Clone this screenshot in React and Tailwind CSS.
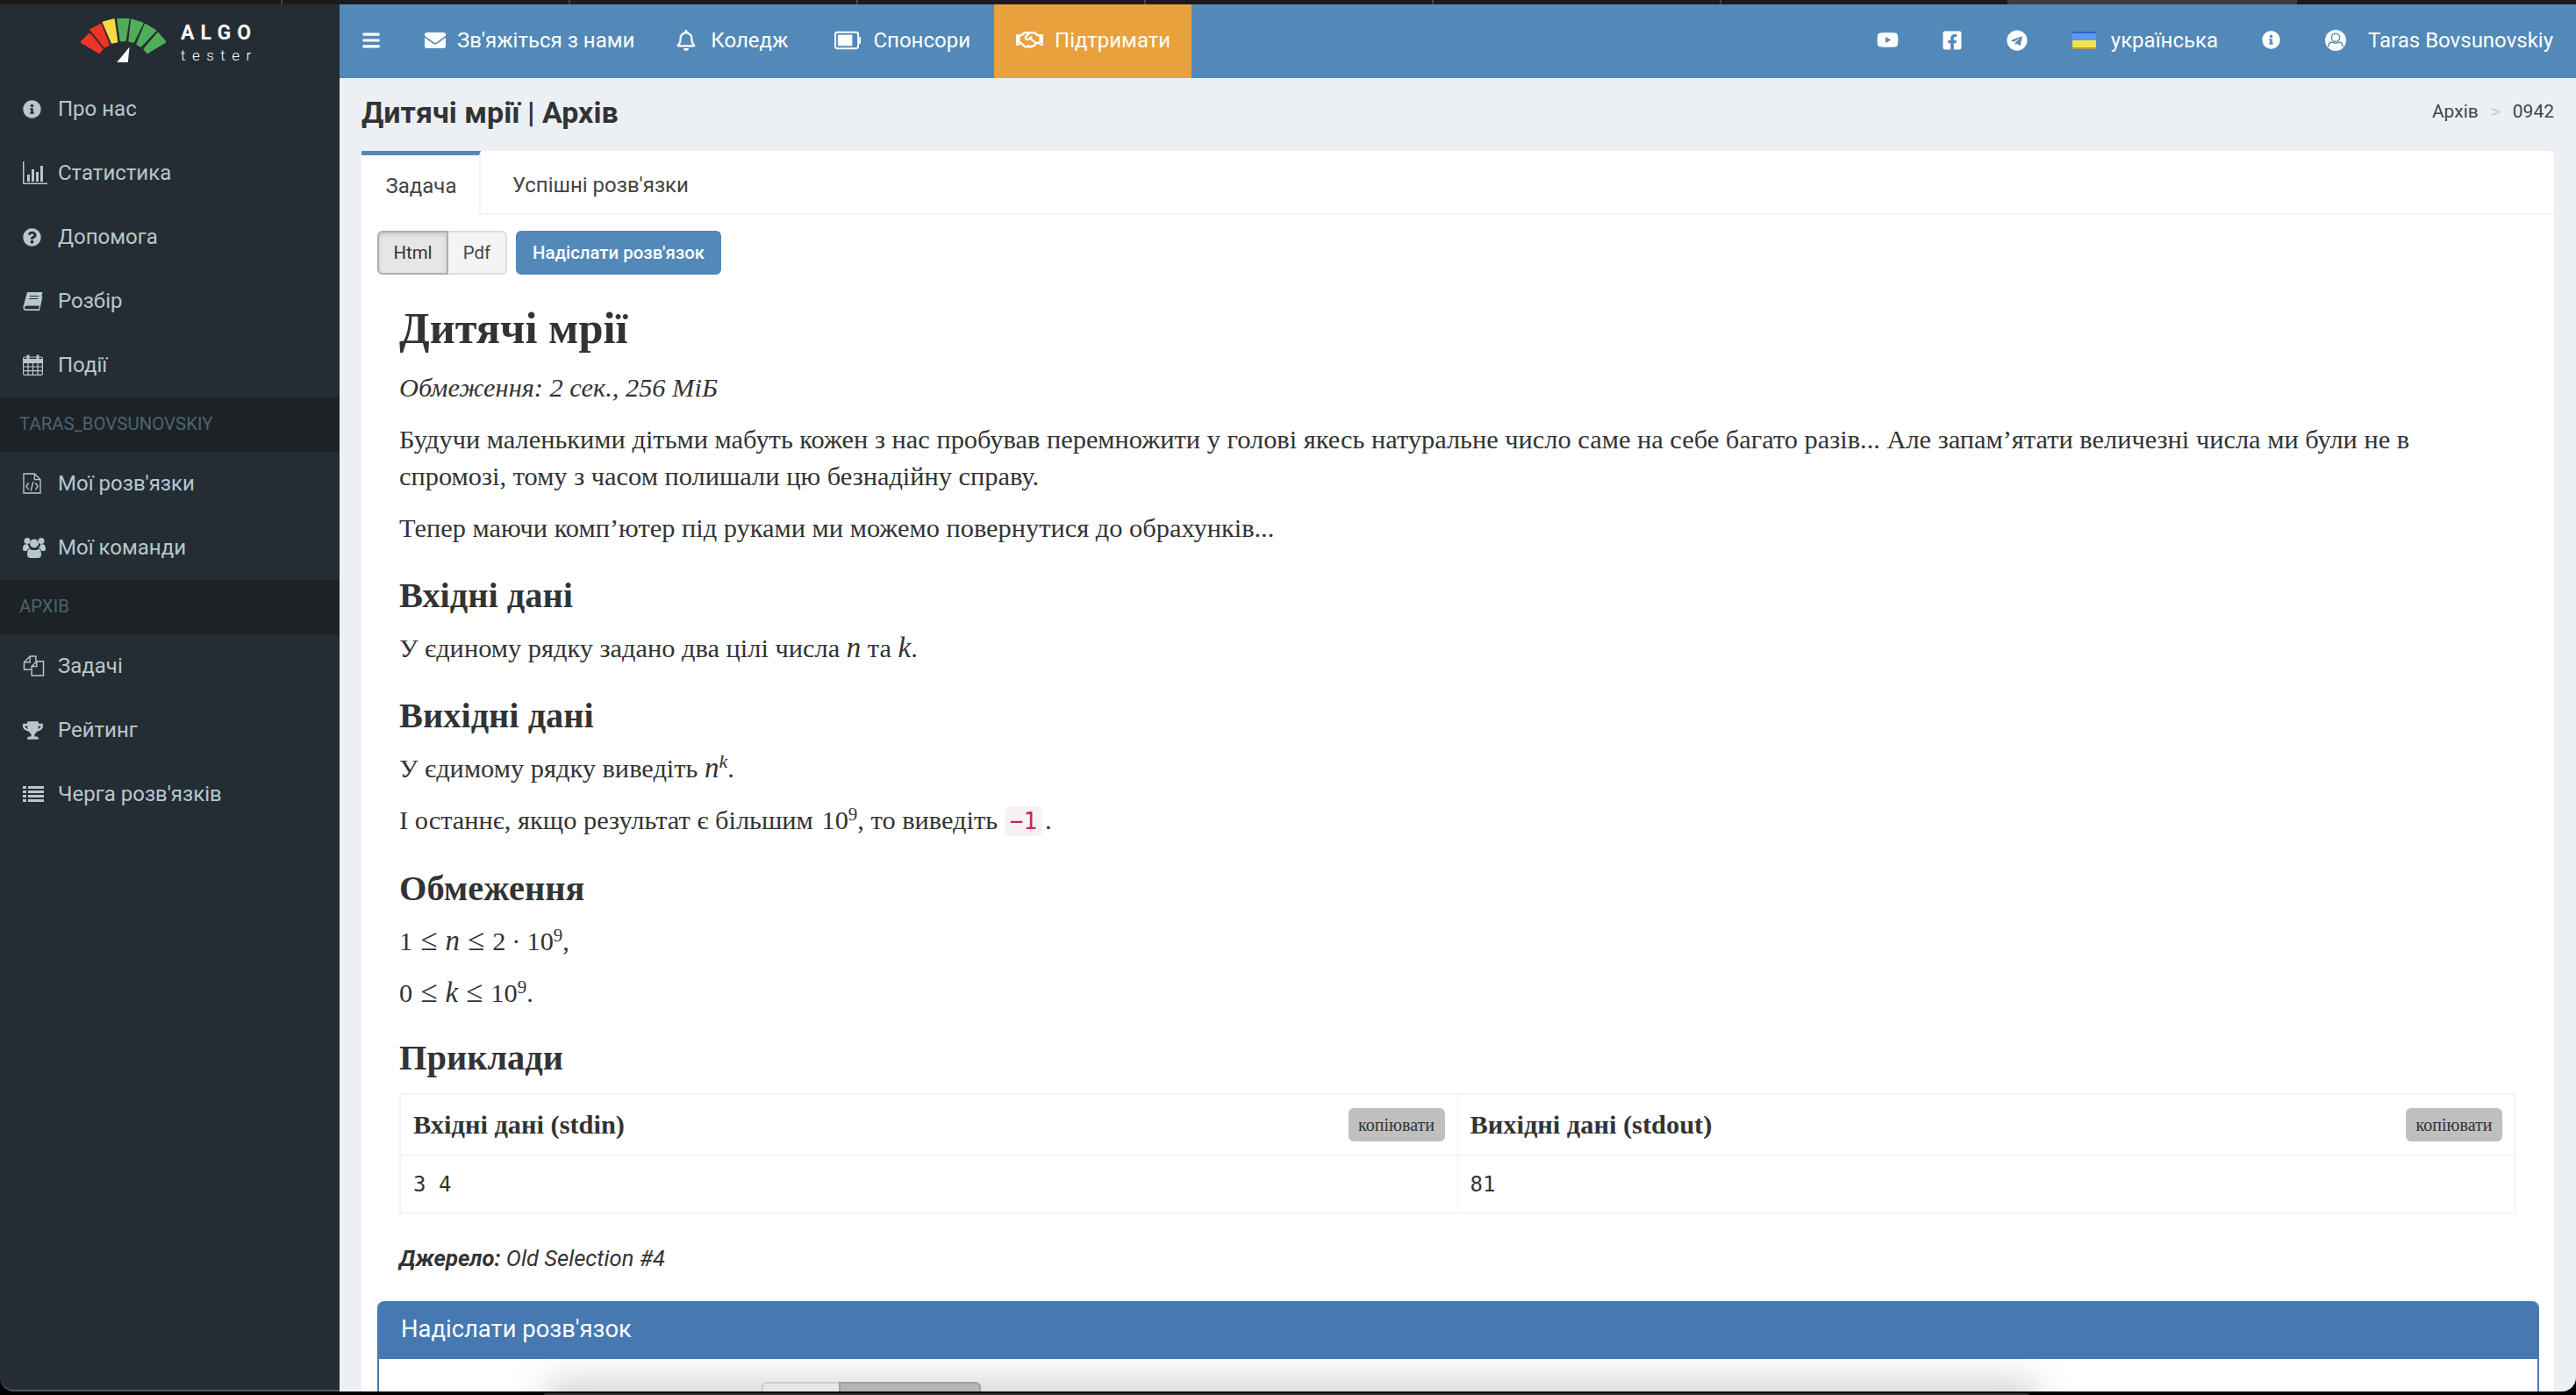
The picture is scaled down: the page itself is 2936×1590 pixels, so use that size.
import {
  FaBars, FaEnvelope, FaRegBell, FaRegHandshake, FaYoutube, FaFacebookSquare, FaTelegram,
  FaInfoCircle, FaQuestionCircle, FaTrophy,
} from 'react-icons/fa';

const SANS = 'font-["Roboto","Noto_Sans",sans-serif]';

function BarChartIcon() {
  return (
    <svg viewBox="0 0 28 26" className="w-[28px] h-[26px]" fill="currentColor">
      <path d="M0 0h1.5v24.5H28V26H0z" />
      <path d="M5 15h3v8H5zM10 9h3v14h-3zM15 12h3v11h-3zM20 5h3v18h-3z" />
    </svg>
  );
}

function BookIcon() {
  return (
    <svg viewBox="0 0 23 21" className="w-[23px] h-[21px]">
      <path
        fill="currentColor"
        d="M5 0h17.5L19 15.5H4.5C3 15.5 2 16.5 2 17.5S3 19.3 4.5 19.3H18l3.2-14h1.3L19 21H4C1.5 21 0 19.3 .4 17z"
      />
      <path d="M8 4.5h10M7.3 7.5h10" stroke="#252d34" strokeWidth="1.2" />
    </svg>
  );
}

function CalendarIcon() {
  return (
    <svg viewBox="0 0 23 24" className="w-[23px] h-[24px]" fill="none" stroke="currentColor" strokeWidth="1.2">
      <rect x=".6" y="3" width="21.8" height="20.4" rx="1.5" />
      <path d="M.6 9.5h21.8M.6 14h21.8M.6 18.7h21.8M6 9.5v13.9M11.5 9.5v13.9M17 9.5v13.9" />
      <path d="M6 .5v5M17 .5v5" strokeWidth="3" />
      <path d="M.6 5h21.8v4.5H.6z" fill="currentColor" stroke="none" />
    </svg>
  );
}

function UsersIcon() {
  return (
    <svg viewBox="0 0 26 24" className="w-[26px] h-[24px]" fill="currentColor">
      <circle cx="13" cy="7.5" r="5" />
      <circle cx="5" cy="4.5" r="3.5" />
      <circle cx="21" cy="4.5" r="3.5" />
      <path d="M1 9.5c1.2-1.2 3-1.5 5-1 .2 1.8 1 3.2 2.2 4.2-1.8.6-3.1 1.8-3.8 3.3H1.500C.4 16 0 15 0 13.5c0-1.5.3-3 1-4zM25 9.5c-1.2-1.2-3-1.5-5-1-.2 1.8-1 3.2-2.2 4.2 1.8.6 3.1 1.8 3.8 3.3h2.9c1.1 0 1.5-1 1.5-2.5 0-1.5-.3-3-1-4z" />
      <path d="M7.5 13.500c1.5 1 3.5 1.5 5.5 1.5s4-.5 5.5-1.500c1.8.8 2.5 3.500 2.500 6.500 0 2.500-1.500 4-3.500 4h-9C6.500 24 5 22.500 5 20c0-3 .7-5.700 2.500-6.500z" />
    </svg>
  );
}

function ListIcon() {
  return (
    <svg viewBox="0 0 24 18" className="w-[24px] h-[18px]" fill="currentColor">
      <path d="M0 0h4v3H0zM6 0h18v3H6zM0 5h4v3H0zM6 5h18v3H6zM0 10h4v3H0zM6 10h18v3H6zM0 15h4v3H0zM6 15h18v3H6z" />
    </svg>
  );
}

function FileCodeIcon() {
  return (
    <svg viewBox="0 0 22 25" className="w-[21px] h-[24px]" fill="none" stroke="currentColor" strokeWidth="1.4">
      <path d="M1 1h13l7 7v16H1zM14 1v7h7" />
      <path d="M7 12l-3 4 3 4M15 12l3 4-3 4M12.5 10.5l-3 11" />
    </svg>
  );
}

function FilesIcon() {
  return (
    <svg viewBox="0 0 25 25" className="w-[25px] h-[24px]" fill="none" stroke="currentColor" strokeWidth="1.5">
      <path d="M8 1h7v6M8 1L1 8v9h8M8 1v7H1" />
      <path d="M16 7h8v17H10V13zM16 7v6h-6" />
    </svg>
  );
}

function BatteryIcon() {
  return (
    <svg viewBox="0 0 32 22" className="w-[31px] h-[22px]" fill="none">
      <rect x="1" y="1.5" width="27" height="19" rx="2.5" stroke="white" strokeWidth="2" />
      <rect x="4" y="4.5" width="17" height="13" fill="white" />
      <path d="M29 7h2v8h-2z" fill="white" />
    </svg>
  );
}

function UserCircleIcon() {
  return (
    <svg viewBox="0 0 24 24" className="w-[24px] h-[24px]" fill="none">
      <circle cx="12" cy="12" r="12" fill="white" />
      <circle cx="12" cy="8.8" r="4.6" stroke="#5289b8" strokeWidth="1.4" />
      <path d="M3.6 19.5c.4-3.500 2.400-5.500 4.600-5.500 2.400 1.500 5.200 1.500 7.600 0 2.200 0 4.200 2 4.600 5.500" stroke="#5289b8" strokeWidth="1.4" />
    </svg>
  );
}

function Flag() {
  return (
    <div className="w-[27px] h-[20px] flex flex-col">
      <div className="h-1/2 bg-[#5b9bea] border-t-2 border-t-[#2f62d8]" />
      <div className="h-1/2 bg-[#f1e34c] border-b-2 border-b-[#b39a55]" />
    </div>
  );
}

function Logo() {
  const segs = [
    ['97,143 127,114 171,167 160,180', '#ee3524'],
    ['130,100 165,82 193,152 178,160', '#ee3524'],
    ['173,75 210,65 221,142 203,146', '#fdd845'],
    ['222,62 261,62 249,138 233,138', '#4fae57'],
    ['270,66 309,78 277,143 262,140', '#4fae57'],
    ['317,82 353,104 302,158 289,150', '#4fae57'],
    ['360,112 387,142 325,180 313,167', '#4fae57'],
  ];
  return (
    <div className="h-[83px] flex items-center pl-[92px] gap-[17px] shrink-0">
      <svg viewBox="97 62 290 150" className="w-[97px] h-[50px] mt-[-1px]">
        {segs.map(([pts, c]) => (
          <polygon key={pts} points={pts} fill={c} stroke={c} strokeWidth="5" strokeLinejoin="round" />
        ))}
        <polygon points="263,160 258,212 220,212" fill="#fff" />
      </svg>
      <div className="text-white mt-[4px]">
        <div className="text-[23px] leading-[26px] font-bold tracking-[0.31em]">ALGO</div>
        <div className="text-[17px] leading-[20px] mt-[2px] font-light tracking-[0.44em]">tester</div>
      </div>
    </div>
  );
}

function SideItem({ icon, label }) {
  return (
    <div className="h-[73px] flex items-center pl-[26px] pb-[1px] text-[#b8c7ce] text-[24px]">
      <span className="w-[40px] flex items-center">{icon}</span>
      {label}
    </div>
  );
}

function SideHeader({ label }) {
  return (
    <div className="h-[62px] flex items-center pl-[22px] pb-[2px] bg-[#1c2226] text-[#4b646f] text-[20.4px]">{label}</div>
  );
}

function Sidebar() {
  return (
    <aside className="w-[387px] shrink-0 bg-[#252d34] flex flex-col rounded-bl-[16px] border-b-2 border-[#50575c]">
      <Logo />
      <SideItem icon={<FaInfoCircle size={21} />} label="Про нас" />
      <SideItem icon={<BarChartIcon />} label="Статистика" />
      <SideItem icon={<FaQuestionCircle size={21} />} label="Допомога" />
      <SideItem icon={<BookIcon />} label="Розбір" />
      <SideItem icon={<CalendarIcon />} label="Події" />
      <SideHeader label="TARAS_BOVSUNOVSKIY" />
      <SideItem icon={<FileCodeIcon />} label="Мої розв'язки" />
      <SideItem icon={<UsersIcon />} label="Мої команди" />
      <SideHeader label="АРХІВ" />
      <SideItem icon={<FilesIcon />} label="Задачі" />
      <SideItem icon={<FaTrophy size={23} />} label="Рейтинг" />
      <SideItem icon={<ListIcon />} label="Черга розв'язків" />
    </aside>
  );
}

function NavItem({ icon, label, className = '' }) {
  return (
    <div className={`h-full flex items-center gap-[13px] px-[25px] pb-[3px] text-white text-[24px] ${className}`}>
      {icon}
      {label}
    </div>
  );
}

function Navbar() {
  return (
    <header className="h-[84px] shrink-0 bg-[#5289b8] flex items-center">
      <NavItem icon={<FaBars size={22} />} />
      <NavItem icon={<FaEnvelope size={24} />} label="Зв'яжіться з нами" className="mr-[-3px]" />
      <NavItem icon={<FaRegBell size={24} />} label="Коледж" className="mr-[3px] gap-[16px]" />
      <NavItem icon={<BatteryIcon />} label="Спонсори" className="mr-[2px]" />
      <NavItem icon={<FaRegHandshake size={31} />} label="Підтримати" className="bg-[#e8a13c] pr-[24px]" />
      <div className="ml-auto h-full flex items-center pr-[26px] pb-[3px] text-white text-[24px]">
        <FaYoutube size={25} className="mr-[49px]" />
        <FaFacebookSquare size={24} className="mr-[50px]" />
        <FaTelegram size={24} className="mr-[51px]" />
        <Flag />
        <span className="ml-[17px] mr-[50px]">українська</span>
        <FaInfoCircle size={21} className="mr-[51px]" />
        <UserCircleIcon />
        <span className="ml-[25px]">Taras Bovsunovskiy</span>
      </div>
    </header>
  );
}

function Heading({ children, className = 'mt-[34px]' }) {
  return <h3 className={`text-[40.4px] leading-[44px] font-bold text-[#333] mb-[17px] ${className}`}>{children}</h3>;
}

function P({ children }) {
  return <p className="mb-[17px]">{children}</p>;
}

function M({ children }) {
  return <i className="text-[33px] leading-none">{children}</i>;
}

function Le() {
  return <span className="text-[35px] leading-none mx-[9px]">≤</span>;
}

function CopyBtn() {
  return (
    <span className="h-[38px] w-[110px] flex items-center justify-center rounded-[6px] bg-[#bfbfbf] text-[20px] font-normal text-[#333] shrink-0">
      копіювати
    </span>
  );
}

function Examples() {
  return (
    <div className="grid grid-cols-2 border-2 border-[#f4f4f4] mt-[18px]">
      <div className="h-[70px] flex items-center justify-between pl-[14px] pr-[14px] border-r border-[#f4f4f4] border-b-2 font-bold">
        Вхідні дані (stdin)
        <CopyBtn />
      </div>
      <div className="h-[70px] flex items-center justify-between pl-[14px] pr-[14px] border-b-2 border-[#f4f4f4] font-bold">
        Вихідні дані (stdout)
        <CopyBtn />
      </div>
      <div className={'h-[64px] flex items-center pl-[14px] border-r border-[#f4f4f4] text-[24px] font-["DejaVu_Sans_Mono",monospace]'}>
        3 4
      </div>
      <div className={'h-[64px] flex items-center pl-[14px] text-[24px] font-["DejaVu_Sans_Mono",monospace]'}>81</div>
    </div>
  );
}

function Problem() {
  return (
    <div className={'pl-[43px] pt-[33px] pr-[43px] text-[30.4px] leading-[42px] text-[#333] font-["Liberation_Serif",serif]'}>
      <h1 className="text-[50.4px] leading-[56px] font-bold mb-[19px]">Дитячі мрії</h1>
      <p className="italic mb-[17px]">Обмеження: 2 сек., 256 МіБ</p>
      <P>
        Будучи маленькими дітьми мабуть кожен з нас пробував перемножити у голові якесь натуральне число саме на
        себе багато разів... Але запам’ятати величезні числа ми були не в спромозі, тому з часом полишали цю
        безнадійну справу.
      </P>
      <P>Тепер маючи комп’ютер під руками ми можемо повернутися до обрахунків...</P>
      <Heading>Вхідні дані</Heading>
      <P>
        У єдиному рядку задано два цілі числа <M>n</M> та <M>k</M>.
      </P>
      <Heading>Вихідні дані</Heading>
      <P>
        У єдимому рядку виведіть <M>n</M>
        <sup className="italic text-[22px]">k</sup>.
      </P>
      <P>
        І останнє, якщо результат є більшим <span className="ml-[2px]">10</span>
        <sup className="text-[21px]">9</sup>, то виведіть{' '}
        <code className={'px-[6px] py-[2px] bg-[#f9f2f4] text-[#c7254e] rounded-[6px] text-[26px] font-["DejaVu_Sans_Mono",monospace]'}>
          −1
        </code>
        <span className="ml-[3px]">.</span>
      </P>
      <Heading>Обмеження</Heading>
      <P>
        1<Le /><M>n</M><Le />2<span className="mx-[7px]">·</span>10<sup className="text-[21px]">9</sup>,
      </P>
      <P>
        0<Le /><M>k</M><Le />10<sup className="text-[21px]">9</sup>.
      </P>
      <Heading className="mt-[31px]">Приклади</Heading>
      <Examples />
      <p className={`${SANS} mt-[32px] text-[25.6px] leading-[36px] italic`}>
        <b>Джерело:</b> Old Selection #4
      </p>
    </div>
  );
}

function SubmitPanel() {
  return (
    <div className="mt-[31px] ml-[18px] mr-[17px] rounded-t-[8px] border-x-2 border-[#4678b2]">
      <div className="h-[66px] flex items-center pl-[25px] bg-[#4678b2] text-white text-[27.4px] rounded-t-[6px]">
        Надіслати розв'язок
      </div>
      <div className="relative h-[37px] overflow-hidden bg-white flex items-end pl-[436px]">
        {/* blurred shadow of the window below, lies over the form */}
        <div className="absolute left-[190px] right-[570px] top-[26px] h-[70px] bg-[#d0d0d0] blur-[20px]" />
        <div className="relative w-[88px] h-[11px] bg-[#e6e6e6] rounded-tl-[6px] border-t-2 border-l-2 border-[#cfcfcf]" />
        <div className="relative w-[162px] h-[11px] bg-[#b5b5b5] rounded-tr-[6px] border-t-2 border-x-2 border-[#a0a0a0]" />
      </div>
    </div>
  );
}

function Content() {
  return (
    <main className="flex-1 min-w-0 min-h-0 bg-[#ecf0f5] px-[25px] overflow-hidden rounded-br-[16px]">
      <div className="h-[83px] flex items-center justify-between pb-[5px]">
        <h2 className="text-[34px] font-bold text-[#333]">Дитячі мрії | Архів</h2>
        <div className="text-[21px] text-[#444] flex gap-[14px]">
          Архів <span className="text-[#ccc]">&gt;</span> 0942
        </div>
      </div>
      <div className="bg-white rounded-t-[6px]">
        <div className="flex h-[73px] border-b-2 border-[#f4f4f4] text-[24px] text-[#444]">
          <div className="w-[136px] flex items-center justify-center border-t-[5px] border-t-[#5289b8] border-r-2 border-r-[#f4f4f4] bg-white h-[73px] pt-[2px] pl-[2px]">
            Задача
          </div>
          <div className="flex items-center pl-[36px] pt-[7px]">Успішні розв'язки</div>
        </div>
        <div className="flex pt-[18px] pl-[18px] text-[20.4px]">
          <div className="w-[81px] h-[50px] flex items-center justify-center bg-[#e6e6e6] border-2 border-[#adadad] rounded-l-[6px] text-[#333] shadow-[inset_0_3px_5px_rgba(0,0,0,0.125)]">
            Html
          </div>
          <div className="w-[67px] h-[50px] flex items-center justify-center bg-[#f4f4f4] border-2 border-l-0 border-[#ddd] rounded-r-[6px] text-[#444]">
            Pdf
          </div>
          <div className="ml-[10px] w-[234px] h-[50px] flex items-center justify-center bg-[#5289b8] rounded-[6px] text-white font-medium">
            Надіслати розв'язок
          </div>
        </div>
        <Problem />
        <SubmitPanel />
      </div>
    </main>
  );
}

function TopStrip() {
  return (
    <div className="h-[5px] shrink-0 bg-[#1b1b1b] flex">
      {[322, 328, 328, 328, 328, 328, 328].map((w, i) => (
        <div key={i} style={{ width: w }} className="border-r-2 border-[#444]" />
      ))}
      <div className="w-[328px] bg-[#3d3d3d]" />
    </div>
  );
}

function BottomStrip() {
  return (
    <div className="h-[4px] shrink-0 bg-black pt-[2px] pl-[620px] pr-[623px]">
      <div className="h-[2px] bg-[#2e2e2e] rounded-t-[4px]" />
    </div>
  );
}

export default function App() {
  return (
    <div className={`w-[2936px] h-[1590px] flex flex-col overflow-hidden bg-black ${SANS}`}>
      <TopStrip />
      <div className="flex-1 min-h-0 flex">
        <Sidebar />
        <div className="flex-1 min-w-0 flex flex-col">
          <Navbar />
          <Content />
        </div>
      </div>
      <BottomStrip />
    </div>
  );
}
